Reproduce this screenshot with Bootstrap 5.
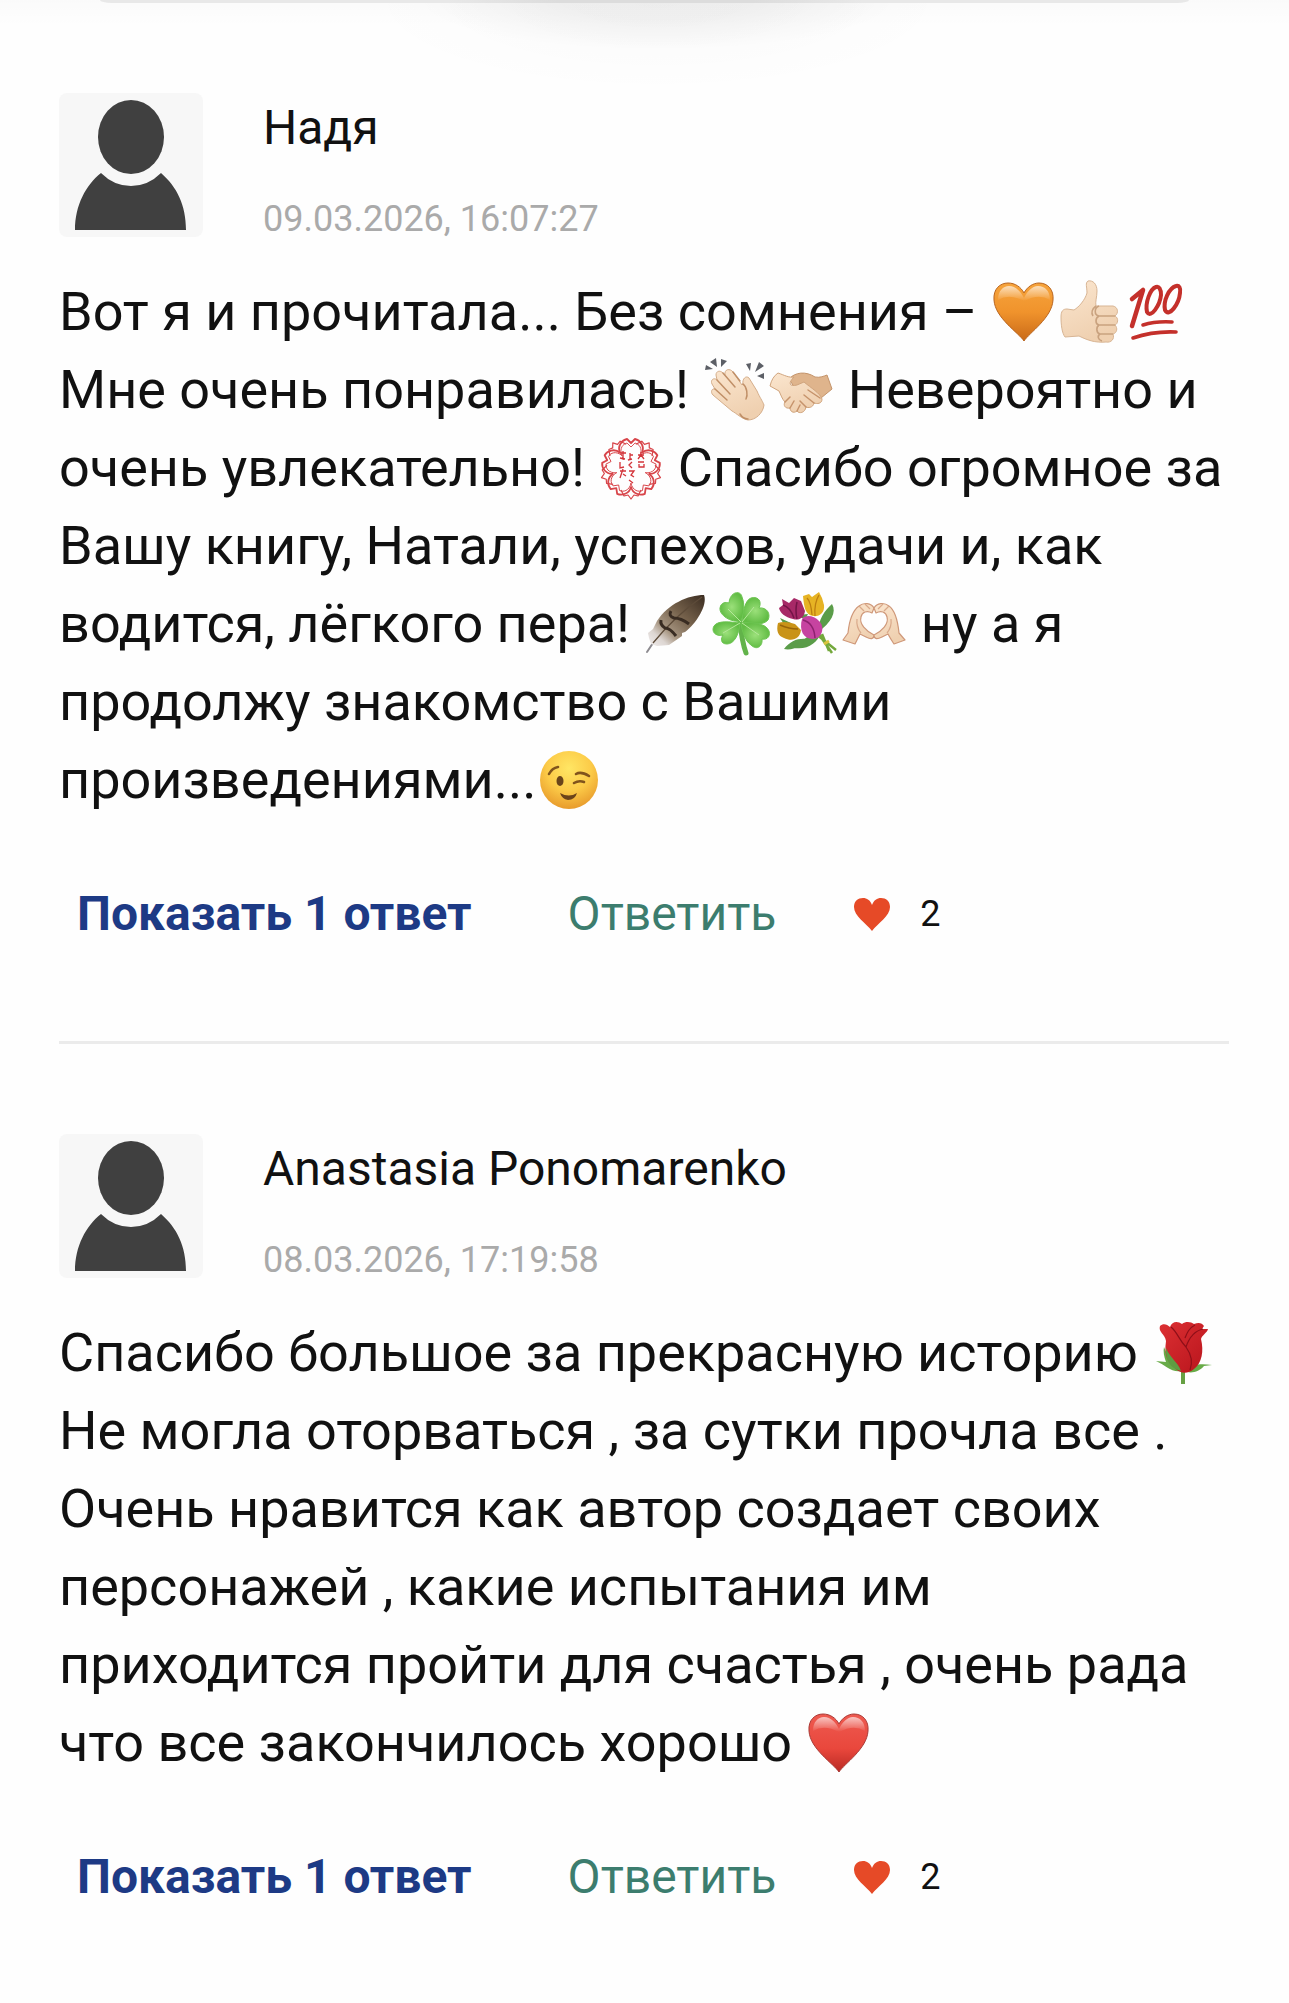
<!DOCTYPE html>
<html lang="ru">
<head>
<meta charset="utf-8">
<meta name="viewport" content="width=device-width, initial-scale=1">
<title>Комментарии</title>
<link href="https://cdn.jsdelivr.net/npm/bootstrap@5.3.0/dist/css/bootstrap.min.css" rel="stylesheet">
<style>
body{font-family:Roboto,"Noto Sans",sans-serif;color:#111;background:#fefefe}
.top-shade{height:93px;background:
 radial-gradient(ellipse 240px 50px at 51% 0,rgba(0,0,0,.04) 40%,transparent),
 radial-gradient(ellipse 300px 93px at 51% 0,rgba(0,0,0,.02),transparent),
 linear-gradient(rgba(0,0,0,.015),transparent 26px)}
.top-bar{height:3px;margin:0 100px;border-radius:0 0 12px 12px/0 0 3px 3px;background:linear-gradient(90deg,#e8e8e8 32%,#dcdcdc 42%,#dcdcdc 60%,#e8e8e8 70%)}
.comment-list{padding:0 60px 0 59px}
.comment-item+.comment-item{border-top:3px solid #ebebeb;padding-top:90px}
.comment-item{padding-bottom:92px}
.avatar-pic{width:144px;height:144px;border-radius:8px;background:#f7f7f7}
.head-row{gap:60px;margin-bottom:36px}
.author-name{font-size:48px;line-height:56px;padding-top:7px}
.post-date{font-size:36px;line-height:36px;color:#aaa}
.comment-text{font-size:54px;line-height:78px;margin-bottom:60px}
.emo{width:66px;height:66px;vertical-align:-9px;margin:-6px 0}
.action-row{line-height:70px;padding-left:18px}
.act{font-size:48px;border:0;background:none;padding:0;line-height:70px}
.act-show{color:#1d3a85;font-weight:700;margin-right:96px}
.act-reply{color:#3c7d6e;margin-right:77px}
.like-icon{width:38px;height:34px}
.like-btn{font-size:36px;gap:29px;color:#111}
</style>
<script src="https://cdn.jsdelivr.net/npm/bootstrap@5.3.0/dist/js/bootstrap.bundle.min.js"></script>
</head>
<body>
<svg width="0" height="0" class="position-absolute" aria-hidden="true">
<defs>
<linearGradient id="gOrange" x1="0" y1="0" x2="0" y2="1"><stop offset="0" stop-color="#f6a43c"/><stop offset=".5" stop-color="#f0932c"/><stop offset="1" stop-color="#c96a18"/></linearGradient>
<linearGradient id="gRed" x1="0" y1="0" x2="0" y2="1"><stop offset="0" stop-color="#ee5a50"/><stop offset=".6" stop-color="#e9473c"/><stop offset="1" stop-color="#b92a24"/></linearGradient>
<linearGradient id="gShine" x1="0" y1="0" x2="0" y2="1"><stop offset="0" stop-color="#fff" stop-opacity=".65"/><stop offset="1" stop-color="#fff" stop-opacity="0"/></linearGradient>
<linearGradient id="gSkin" x1="0" y1="0" x2=".4" y2="1"><stop offset="0" stop-color="#fbe6cf"/><stop offset="1" stop-color="#efd0b0"/></linearGradient>
<radialGradient id="gFace" cx=".5" cy=".3" r=".7"><stop offset="0" stop-color="#ffe664"/><stop offset=".55" stop-color="#fccb48"/><stop offset="1" stop-color="#e89b2c"/></radialGradient>
<linearGradient id="gFeather" x1="1" y1="0" x2="0" y2="1"><stop offset="0" stop-color="#3a2c20"/><stop offset=".4" stop-color="#75614b"/><stop offset=".68" stop-color="#a89783"/><stop offset=".82" stop-color="#ddd6d2"/><stop offset="1" stop-color="#f1eeee"/></linearGradient>
<radialGradient id="gLeaf"><stop offset="0" stop-color="#9be07a"/><stop offset="1" stop-color="#62bd45"/></radialGradient>
<linearGradient id="gRose" x1="0" y1="0" x2="1" y2="1"><stop offset="0" stop-color="#dc3033"/><stop offset="1" stop-color="#b8141c"/></linearGradient>
<symbol id="person" viewBox="0 0 144 144">
<ellipse cx="72" cy="44" rx="33" ry="37" fill="#404040"/>
<path d="M42 80Q55 93 72 93T102 80C118 94 127 112 127 137H16C16 112 27 92 42 80Z" fill="#404040"/>
</symbol>
<symbol id="like" viewBox="0 0 38 34"><path d="M19 34C13 26 1 19 1 10C1 4 5 1 10 1C14 1 17 3 19 8C21 3 24 1 28 1C33 1 37 4 37 10C37 19 25 26 19 34Z" fill="#e64a27"/></symbol>
<path id="heartShape" d="M33 62C28 54 4 39 3 21C2 10 9 4 17 4C24 4 30 8 33 14C36 8 42 4 48 4C57 4 63 11 62 21C61 39 38 54 33 62Z"/>
<path id="heartShine" d="M7 21C7 12 12 7 18 7C25 7 30 13 33 19C36 13 41 7 47 7C54 7 59 12 59 21Q48 14 33 22Q18 14 7 21Z"/>
<g id="petal"><path d="M22 18C19 11 24 5 29 4L33 8L37 4C42 5 47 11 44 18" stroke-width="1.8"/><path d="M24 21C21 13 25 9 29 8L33 12L37 8C41 9 45 13 42 21" stroke-width=".9"/></g>
<path id="scallop" d="M23 11L26 5L30 6L33 2L36 6L40 5L43 11" stroke-width="1.2"/>
</defs>
</svg>

<div class="top-shade"><div class="top-bar"></div></div>

<main class="comment-list">
<article class="comment-item">
<div class="d-flex head-row">
<svg class="avatar-pic flex-shrink-0" role="img" aria-label="Аватар"><use href="#person"/></svg>
<div class="d-flex flex-column justify-content-between">
<div class="author-name">Надя</div>
<time class="post-date">09.03.2026, 16:07:27</time>
</div>
</div>
<p class="comment-text">Вот я и прочитала... Без сомнения – <svg class="emo" viewBox="0 0 66 66" role="img" aria-label="🧡"><use href="#heartShape" fill="url(#gOrange)" stroke="#b9651f" stroke-width="1"/><use href="#heartShine" fill="url(#gShine)"/></svg><svg class="emo" viewBox="0 0 66 66" role="img" aria-label="👍🏻"><path d="M4 38C4 32 6 30 10 30L17 31C22 28 28 21 30 14C30 8 28 4 31 2C36 1 40 5 40 12C40 18 38 23 39 27L56 27C61 28 62 34 58 37C62 39 61 45 58 46C61 49 60 54 56 55C58 60 54 64 49 63C38 64 30 61 22 57L8 58C5 54 4 46 4 38Z" fill="url(#gSkin)" stroke="#d8b594" stroke-width="1"/><path d="M58 37H42C37 36 37 29 42 27M58 46H42C38 45 38 39 42 37M56 55H43C39 54 39 48 42 46M43 55C40 57 41 61 45 62M39 27C35 30 34 34 36 37" fill="none" stroke="#c9a27f" stroke-width="1.6"/></svg><svg class="emo" viewBox="0 0 66 66" role="img" aria-label="💯"><g fill="none" stroke="#c4302b" stroke-linecap="round" stroke-linejoin="round"><path d="M9 20L20 11L9 47" stroke-width="4.5"/><path d="M33 8C27 10 22 24 24 33C28 40 37 26 38 16C38 10 36 7 33 8ZM53 7C46 9 40 22 42 31C46 39 56 25 57 14C58 9 56 6 53 7Z" stroke-width="4"/><path d="M20 46Q33 42 49 43M10 59Q30 52 53 53" stroke-width="3.6"/></g></svg> Мне очень понравилась! <svg class="emo" viewBox="0 0 66 66" role="img" aria-label="👏🏻"><g fill="#5c5f66"><path d="M8 5L14 1L15 10ZM3 13L4 8L11 12ZM19 2L25 4L19 10ZM44 7L49 6L48 14ZM57 5L62 9L53 15ZM55 19L62 16L62 22Z"/></g><path d="M41 27C40 22 44 18 47 21L55 34C58 41 60 43 62 48C61 56 54 63 46 63C40 62 34 56 30 54L11 38C8 35 10 31 13 32L10 27C8 23 12 20 15 23L14 18C14 14 18 13 21 16L23 18C22 12 28 11 31 15L40 28Z" fill="url(#gSkin)" stroke="#d5ae8b" stroke-width="1"/><path d="M13 32L25 43M15 23L28 37M21 16L33 30M41 27C45 30 46 38 44 42M38 57Q41 62 46 62M31 15L38 24" fill="none" stroke="#c08f67" stroke-width="1.5" stroke-linecap="round"/></svg><svg class="emo" viewBox="0 0 66 66" role="img" aria-label="🤝"><path d="M21 22C27 15 38 14 47 20C52 21 56 19 59 18L64 32L53 41L34 42Z" fill="#dfb48c" stroke="#c4946b" stroke-width="1"/><path d="M10 16C16 18 21 21 26 20C20 26 21 30 29 28L36 25C43 31 52 36 54 42C54 47 49 47 46 46C45 51 40 51 38 50C37 56 31 57 29 54C25 57 22 54 22 51C17 52 15 48 17 45C14 42 13 38 11 34L2 29Q4 20 10 16Z" fill="url(#gSkin)" stroke="#d0a47d" stroke-width="1"/><path d="M46 46L36 38M52 41L40 33M38 50L32 44M22 51L26 44M29 54L32 48M17 45L22 40" fill="none" stroke="#c6936b" stroke-width="1.5" stroke-linecap="round"/></svg> Невероятно и очень увлекательно! <svg class="emo" viewBox="0 0 66 66" role="img" aria-label="💮"><g fill="none" stroke="#d8454a" stroke-linejoin="round"><use href="#scallop" transform="rotate(36 33 33)"/><use href="#scallop" transform="rotate(108 33 33)"/><use href="#scallop" transform="rotate(180 33 33)"/><use href="#scallop" transform="rotate(252 33 33)"/><use href="#scallop" transform="rotate(324 33 33)"/><use href="#petal"/><use href="#petal" transform="rotate(72 33 33)"/><use href="#petal" transform="rotate(144 33 33)"/><use href="#petal" transform="rotate(216 33 33)"/><use href="#petal" transform="rotate(288 33 33)"/></g><g fill="none" stroke="#d3343a" stroke-width="1.3"><path d="M40 20H46M43 17V20L40 24M43 20L46 24M40 27H46M41 29V32H46V29M32 18V24L30 25L34 24M32 20H35M34 27L31 30L34 33M31 36H36L33 40L36 42M31 45L35 48M22 18H28M25 16V24L22 23L27 24M22 27V33L26 32M22 36H28M25 34L22 43M25 39L28 41"/></g></svg> Спасибо огромное за Вашу книгу, Натали, успехов, удачи и, как водится, лёгкого пера! <svg class="emo" viewBox="0 0 66 66" role="img" aria-label="🪶"><path d="M4 61L10 52" stroke="#8d8b90" stroke-width="2" stroke-linecap="round"/><path d="M61 4C65 14 53 33 42 41L39 42L39 45L26 54L14 55L8 53L6 47L5 42L10 38L14 30C25 13 45 4 61 4Z" fill="url(#gFeather)"/><path d="M59 6Q32 25 10 52" fill="none" stroke="#5d4b39" stroke-width="1.3"/><path d="M28 20Q25 25 31 27Q38 27 46 33M18 29Q17 34 22 37Q27 37 33 45" fill="none" stroke="#392c22" stroke-width="3"/></svg><svg class="emo" viewBox="0 0 66 66" role="img" aria-label="🍀"><path d="M31 31Q33 51 37 62" fill="none" stroke="#62b34a" stroke-width="5" stroke-linecap="round"/><g fill="url(#gLeaf)" stroke="#6cc451" stroke-width="1"><path d="M32 30C22 32 10 24 11 17C12 11 17 11 20 12C21 0 32 -1 33 6C36 13 35 24 32 30Z"/><path d="M33 31C34 21 36 9 42 7C50 5 53 11 50 17C58 16 62 23 59 29C54 35 41 33 33 31Z"/><path d="M32 32C43 31 57 32 60 40C62 47 56 49 53 48C54 55 48 60 42 54C36 50 33 40 32 32Z"/><path d="M31 32C30 44 25 53 18 53C11 53 12 47 14 44C6 46 2 40 5 35C9 29 21 31 31 32Z"/></g><path d="M32 31L19 18M33 31L45 16M33 32L50 44M31 32L14 42" stroke="#b5e89a" stroke-width="1"/></svg><svg class="emo" viewBox="0 0 66 66" role="img" aria-label="💐"><path d="M57 13C62 21 56 32 43 41C43 29 50 19 57 13ZM32 48C23 47 15 50 9 58C18 60 29 54 32 48ZM46 41C33 44 23 51 20 57C32 59 43 52 46 41ZM5 27L16 32L10 35ZM23 24L30 29L33 23Z" fill="#5a9c49"/><path d="M41 43L61 59M43 42L57 62M47 43L54 60" stroke="#73a83c" stroke-width="2.5"/><path d="M49 53L54 50" stroke="#d9c33d" stroke-width="3"/><path d="M28 5L34 3L37 6L44 1L47 7L49 14C50 22 44 26 38 25C30 24 29 15 28 5Z" fill="#e6b324"/><path d="M32 7Q36 11 37 24M44 4Q39 12 40 25" stroke="#bd7e10" fill="none" stroke-width="1.3"/><path d="M4 17L8 14L7 8L14 12L19 7L26 10L30 20C29 27 24 30 18 28C10 26 5 22 4 17Z" fill="#a72967"/><path d="M8 14Q15 16 19 27M22 11Q20 19 22 28" stroke="#731447" fill="none" stroke-width="1.5"/><path d="M3 32C8 30 14 31 20 33L26 39C25 48 17 51 9 47C3 45 1 40 3 32Z" fill="#c99318"/><path d="M5 34Q14 38 23 38" stroke="#996409" fill="none" stroke-width="1.5"/><path d="M27 28C31 23 39 25 44 30C51 37 46 48 38 48C28 48 24 39 27 28Z" fill="#c643a0"/><path d="M28 29Q39 32 40 47" stroke="#8e226f" fill="none" stroke-width="1.5"/></svg><svg class="emo" viewBox="0 0 66 66" role="img" aria-label="🫶🏻"><g fill="url(#gSkin)" stroke="#cf9879" stroke-width="1.2" stroke-linejoin="round"><path d="M2 49L7 42C8 32 11 20 18 15C23 11 30 12 33 17L31 22C26 19 21 21 20 26C18 33 25 40 33 44C33 49 29 48 25 46L19 43Q17 47 14 53Z"/><path d="M64 49L58 42C57 32 55 20 48 15C43 11 36 12 33 17L35 22C40 19 45 21 46 26C48 33 41 40 33 44C33 49 37 48 41 46L47 43Q49 47 53 53Z"/></g><path d="M18 15L23 20M24 13L29 18M48 15L43 20M42 13L37 18M16 28Q15 36 20 42M50 28Q51 36 46 42" fill="none" stroke="#d9a98a" stroke-width="1.2"/></svg> ну а я продолжу знакомство с Вашими произведениями...<svg class="emo" viewBox="0 0 66 66" role="img" aria-label="😉"><circle cx="33" cy="33" r="29" fill="url(#gFace)"/><ellipse cx="24" cy="34" rx="3.5" ry="5" fill="#69441a"/><path d="M13 27Q16 21 22 20M40 27Q45 24 53 29M38 36Q43 33 48 35" fill="none" stroke="#81541c" stroke-width="2.6" stroke-linecap="round"/><path d="M24 46Q33 51 41 46Q39 53 32 53Q26 52 24 46Z" fill="#6c431a"/></svg></p>
<div class="d-flex align-items-center action-row">
<button type="button" class="act act-show">Показать 1 ответ</button>
<button type="button" class="act act-reply">Ответить</button>
<button type="button" class="act like-btn d-flex align-items-center" aria-label="Нравится: 2"><svg class="like-icon"><use href="#like"/></svg><span>2</span></button>
</div>
</article>

<article class="comment-item">
<div class="d-flex head-row">
<svg class="avatar-pic flex-shrink-0" role="img" aria-label="Аватар"><use href="#person"/></svg>
<div class="d-flex flex-column justify-content-between">
<div class="author-name">Anastasia Ponomarenko</div>
<time class="post-date">08.03.2026, 17:19:58</time>
</div>
</div>
<p class="comment-text">Спасибо большое за прекрасную историю <svg class="emo" viewBox="0 0 66 66" role="img" aria-label="🌹"><path d="M30 50H34V64H30Z" fill="#66a043"/><path d="M13 27C17 38 24 44 30 51C21 53 14 45 5 41L15 42C13 37 12 31 13 27ZM61 45C51 44 43 43 33 51C40 54 48 52 53 46Z" fill="#68ab48"/><path d="M9 6C12 3 16 4 19 7C21 1 27 1 31 4C35 1 40 2 43 4C48 2 51 3 53 6L51 9L57 9C56 13 51 15 50 19C53 31 51 43 43 49C37 54 30 54 25 49C16 42 13 35 15 21C14 14 7 12 9 6Z" fill="url(#gRose)"/><path d="M20 7C27 13 28 20 35 27C40 34 42 42 39 50M52 9C43 11 38 18 35 27M44 5C38 8 36 13 34 18" fill="none" stroke="#8e0f18" stroke-width="1.2"/><path d="M15 28C19 38 27 42 30 51Q14 47 15 28Z" fill="#5f9c42"/></svg> Не могла оторваться , за сутки прочла все . Очень нравится как автор создает своих персонажей , какие испытания им приходится пройти для счастья , очень рада что все закончилось хорошо <svg class="emo" viewBox="0 0 66 66" role="img" aria-label="❤️"><use href="#heartShape" fill="url(#gRed)" stroke="#a93a36" stroke-width="1"/><use href="#heartShine" fill="url(#gShine)"/></svg></p>
<div class="d-flex align-items-center action-row">
<button type="button" class="act act-show">Показать 1 ответ</button>
<button type="button" class="act act-reply">Ответить</button>
<button type="button" class="act like-btn d-flex align-items-center" aria-label="Нравится: 2"><svg class="like-icon"><use href="#like"/></svg><span>2</span></button>
</div>
</article>
</main>
</body>
</html>
